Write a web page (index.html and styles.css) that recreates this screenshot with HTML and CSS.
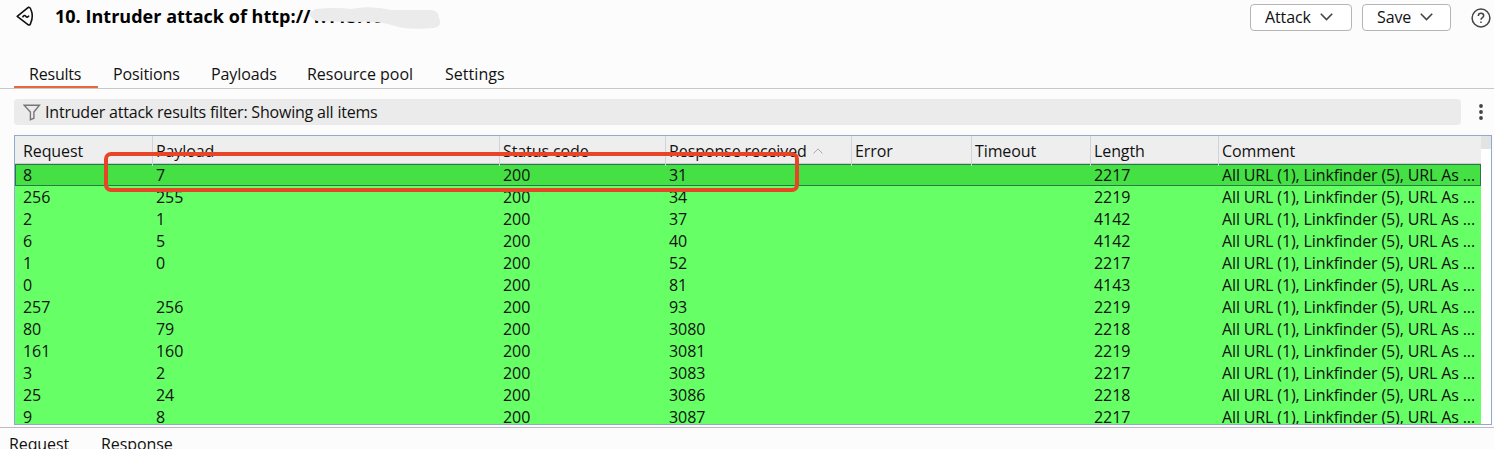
FILE: index.html
```html
<!DOCTYPE html>
<html lang="en">
<head>
<meta charset="utf-8">
<title>Intruder attack</title>
<link rel="stylesheet" href="styles.css">
</head>
<body>
<div class="window">
  <header class="titlebar">
    <svg class="logo" width="20" height="22" viewBox="0 0 20 22"><path d="M1.200 10.400 12.300 1.300Q14 .8 14.800 3.200Q17.700 10 14.800 16.800Q14 19.800 12.300 18.800Z"/><path d="M6.500 11.400Q8.300 8.300 9.800 10.300T13 9.600"/></svg>
    <h1 class="title">10. Intruder attack of http://<span class="host">1.113.168<svg class="smudge" width="134" height="24" viewBox="0 0 134 24"><path d="M8 3Q30 1 44 3Q62-1 85 4L125 4Q132 5 132 12Q136 20 127 22Q100 24 88 20Q72 15 52 16L10 15Q-3 9 8 3Z"/></svg></span></h1>
    <div class="actions">
      <button class="button attack">Attack<svg width="13" height="8" viewBox="0 0 13 8"><path d="m.8.8 5.700 5.700L12.200.8"/></svg></button>
      <button class="button save">Save<svg width="13" height="8" viewBox="0 0 13 8"><path d="m.8.8 5.700 5.700L12.200.8"/></svg></button>
      <svg class="help" width="20" height="20" viewBox="0 0 20 20"><circle cx="10" cy="10" r="8.900"/><path d="M7.300 8Q7.300 5.300 10 5.300T12.700 7.800C12.700 9.700 10 9.600 10 11.800"/><path d="M10 13.500v1.600"/></svg>
    </div>
  </header>
  <nav class="tabs">
    <span class="tab active t1">Results</span><span class="tab t2">Positions</span><span class="tab t3">Payloads</span><span class="tab t4">Resource pool</span><span class="tab t5">Settings</span>
  </nav>
  <div class="filterrow">
    <div class="filter"><svg width="18" height="17" viewBox="0 0 18 17"><path d="M1.200 1.200h15.200L10.900 8v6.200l-3.500 1.500V8Z"/></svg><span>Intruder attack results filter: Showing all items</span></div>
    <svg class="more" width="4" height="16" viewBox="0 0 4 16"><circle cx="2" cy="2" r="1.900"/><circle cx="2" cy="8" r="1.900"/><circle cx="2" cy="14" r="1.900"/></svg>
  </div>
  <div class="results">
    <div class="grid">
      <div class="row head"><span>Request</span><span>Payload</span><span>Status code</span><span class="recv">Response received<svg width="10" height="6" viewBox="0 0 10 6"><path d="m.6 5.400 4.400-4.500 4.400 4.500"/></svg></span><span>Error</span><span>Timeout</span><span>Length</span><span>Comment</span></div>
      <div class="row selected"><span>8</span><span>7</span><span>200</span><span>31</span><span></span><span></span><span>2217</span><span class="c">All URL (1), Linkfinder (5), URL As ...</span></div>
      <div class="row"><span>256</span><span>255</span><span>200</span><span>34</span><span></span><span></span><span>2219</span><span class="c">All URL (1), Linkfinder (5), URL As ...</span></div>
      <div class="row"><span>2</span><span>1</span><span>200</span><span>37</span><span></span><span></span><span>4142</span><span class="c">All URL (1), Linkfinder (5), URL As ...</span></div>
      <div class="row"><span>6</span><span>5</span><span>200</span><span>40</span><span></span><span></span><span>4142</span><span class="c">All URL (1), Linkfinder (5), URL As ...</span></div>
      <div class="row"><span>1</span><span>0</span><span>200</span><span>52</span><span></span><span></span><span>2217</span><span class="c">All URL (1), Linkfinder (5), URL As ...</span></div>
      <div class="row"><span>0</span><span></span><span>200</span><span>81</span><span></span><span></span><span>4143</span><span class="c">All URL (1), Linkfinder (5), URL As ...</span></div>
      <div class="row"><span>257</span><span>256</span><span>200</span><span>93</span><span></span><span></span><span>2219</span><span class="c">All URL (1), Linkfinder (5), URL As ...</span></div>
      <div class="row"><span>80</span><span>79</span><span>200</span><span>3080</span><span></span><span></span><span>2218</span><span class="c">All URL (1), Linkfinder (5), URL As ...</span></div>
      <div class="row"><span>161</span><span>160</span><span>200</span><span>3081</span><span></span><span></span><span>2219</span><span class="c">All URL (1), Linkfinder (5), URL As ...</span></div>
      <div class="row"><span>3</span><span>2</span><span>200</span><span>3083</span><span></span><span></span><span>2217</span><span class="c">All URL (1), Linkfinder (5), URL As ...</span></div>
      <div class="row"><span>25</span><span>24</span><span>200</span><span>3086</span><span></span><span></span><span>2218</span><span class="c">All URL (1), Linkfinder (5), URL As ...</span></div>
      <div class="row"><span>9</span><span>8</span><span>200</span><span>3087</span><span></span><span></span><span>2217</span><span class="c">All URL (1), Linkfinder (5), URL As ...</span></div>
    </div>
    <div class="scroll"><div class="thumb"></div></div>
    <div class="callout"></div>
  </div>
  <footer class="bottom"><span>Request</span><span>Response</span></footer>
</div>
</body>
</html>
```
FILE: styles.css
```css
* { box-sizing: border-box; }
body { margin: 0; background: #fcfcfc; color: #111; font: 16px/22px "Open Sans", "Noto Sans", sans-serif; font-variant-ligatures: none; overflow: hidden; }
svg { fill: none; stroke: #444; flex: none; }
.window { width: 1494px; height: 449px; overflow: hidden; display: flex; flex-direction: column; }
.titlebar { height: 60px; flex: none; display: flex; align-items: flex-start; padding: 4px 3px 0 16px; }
.logo { margin-top: 2px; stroke: #111; stroke-width: 1.6; stroke-linejoin: round; }
.title { margin: 0 0 0 19px; font-size: 18px; line-height: 24px; font-weight: 700; color: #000; letter-spacing: .02px; white-space: nowrap; }
.host { position: relative; }
.smudge { position: absolute; left: -4px; top: 2px; fill: #ebebeb; stroke: none; }
.actions { margin-left: auto; display: flex; gap: 10px; }
.button { height: 27px; border: 1px solid #b5b5b5; border-radius: 4px; background: #fff; color: #111; font: inherit; padding: 0 0 1px 14px; display: flex; align-items: center; gap: 9px; letter-spacing: -.1px; }
.button svg { stroke-width: 1.6; }
.attack { width: 102px; }
.save { width: 89px; }
.help { margin: 4px 0 0 10px; stroke-width: 1.5; }
.tabs { height: 29px; flex: none; display: flex; padding-left: 14px; border-bottom: 1px solid #c8c8c8; }
.tab { padding: 3px 0 0 15px; height: 28px; white-space: nowrap; letter-spacing: -.1px; }
.active { border-bottom: 2px solid #e8683c; }
.t1 { width: 84px; letter-spacing: -.2px; }
.t2 { width: 98px; }
.t3 { width: 96px; }
.t4 { width: 138px; letter-spacing: -.02px; }
.t5 { letter-spacing: .05px; }
.filterrow { display: flex; flex: none; height: 46px; padding: 10px 0 0 14px; }
.filter { width: 1447px; height: 26px; border-radius: 4px; background: #ebebeb; display: flex; align-items: center; padding-left: 9px; gap: 4px; letter-spacing: -.2px; }
.filter svg { stroke: #777; stroke-width: 1.4; }
.more { margin: 5px 0 0 18px; fill: #444; stroke: none; }
.results { position: relative; flex: none; margin-left: 14px; width: 1478px; height: 290px; border: 1px solid #8faacc; display: flex; overflow: hidden; }
.grid { width: 1466px; flex: none; background: #66ff66; }
.row { display: grid; grid-template-columns: 137px 347px 166px 186px 120px 119px 128px 263px; height: 22px; line-height: 23px; letter-spacing: -.08px; }
.row span { padding-left: 4px; white-space: nowrap; }
.row span:first-child { padding-left: 8px; }
.row .c { letter-spacing: -.13px; }
.head { height: 28px; line-height: 30px; background: #eee; border-bottom: 1px solid #ccc; letter-spacing: -.1px; }
.head span + span { border-left: 1px solid #d0d4d8; padding-left: 3px; }
.recv { display: flex; align-items: center; gap: 6px; }
.recv svg { stroke: #aaa; }
.selected { background: #44e044; box-shadow: inset 0 0 0 1px #28784c; }
.scroll { flex: 1; background: #fff; }
.thumb { height: 13px; background: #e3e3e3; }
.callout { position: absolute; left: 89px; top: 16px; width: 695px; height: 40px; border: 4px solid #e84428; border-radius: 7px; }
.bottom { margin-top: 2px; flex: 1; border-top: 1px solid #c4b8c0; display: flex; gap: 32px; padding: 5px 0 0 9px; letter-spacing: -.1px; }
```
